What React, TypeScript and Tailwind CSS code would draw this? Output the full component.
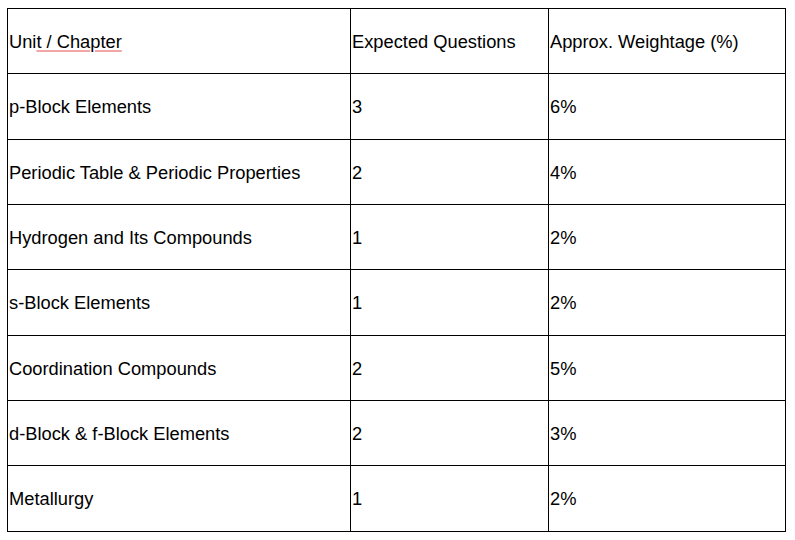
const rows = [
  { chapter: 'p-Block Elements', questions: '3', weight: '6%' },
  { chapter: 'Periodic Table & Periodic Properties', questions: '2', weight: '4%' },
  { chapter: 'Hydrogen and Its Compounds', questions: '1', weight: '2%' },
  { chapter: 's-Block Elements', questions: '1', weight: '2%' },
  { chapter: 'Coordination Compounds', questions: '2', weight: '5%' },
  { chapter: 'd-Block & f-Block Elements', questions: '2', weight: '3%' },
  { chapter: 'Metallurgy', questions: '1', weight: '2%' },
];

// row pitches in the sheet alternate 65/66px
const heights = ['h-[66px]', 'h-[65px]', 'h-[65px]', 'h-[66px]', 'h-[65px]', 'h-[65px]', 'h-[66px]'];

function Cell({ className, children }: { className: string; children: React.ReactNode }) {
  return (
    <div className={`flex items-center pl-px pt-px border-r border-b border-black ${className}`}>
      {children}
    </div>
  );
}

export default function App() {
  return (
    <div className="w-[795px] h-[540px] bg-white pt-[8px] pl-[7px] text-[18.3px] text-black font-['Liberation_Sans',Arial,sans-serif]">
      <div className="w-[779px] border-t border-l border-black">
        {/* Header */}
        <div className="flex">
          <Cell className="w-[343px] h-[65px]">
            <span>
              Uni
              <span className="underline decoration-solid decoration-[#f2a7a7] decoration-2 underline-offset-[2px]">
                t / Chapter
              </span>
            </span>
          </Cell>
          <Cell className="w-[198px] h-[65px]">Expected Questions</Cell>
          <Cell className="w-[237px] h-[65px]">Approx. Weightage (%)</Cell>
        </div>

        {rows.map((row, i) => (
          <div key={row.chapter} className="flex">
            <Cell className={`w-[343px] ${heights[i]}`}>{row.chapter}</Cell>
            <Cell className={`w-[198px] ${heights[i]}`}>{row.questions}</Cell>
            <Cell className={`w-[237px] ${heights[i]}`}>{row.weight}</Cell>
          </div>
        ))}
      </div>
    </div>
  );
}
